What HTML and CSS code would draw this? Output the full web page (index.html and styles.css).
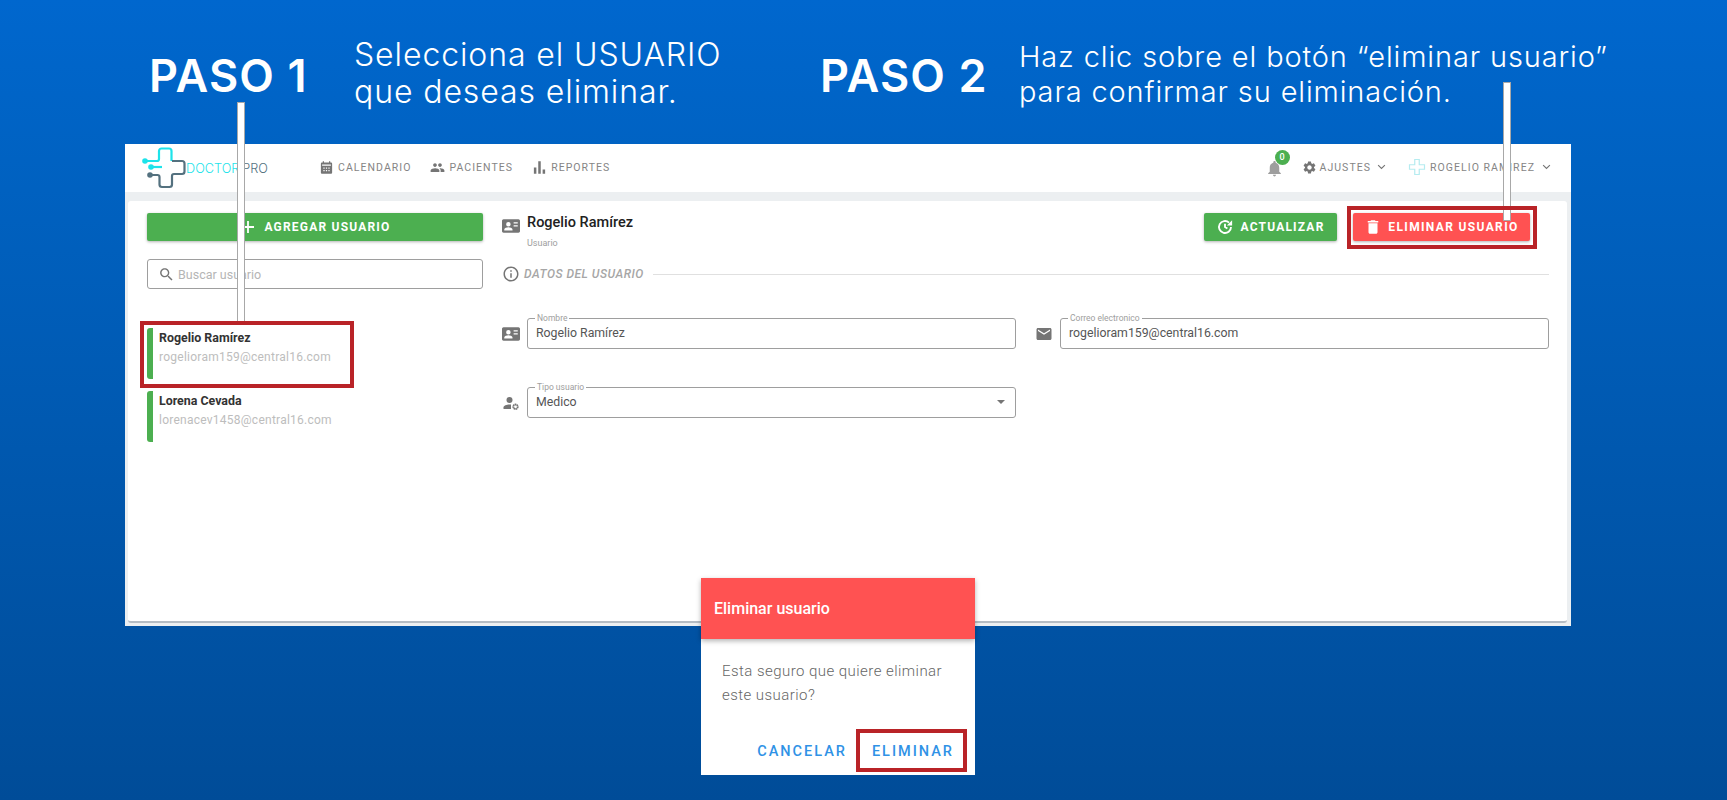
FILE: index.html
```html
<!DOCTYPE html>
<html lang="es">
<head>
    <meta charset="UTF-8">
    <title>Eliminar usuario</title>
    <link rel="stylesheet" href="styles.css">
</head>
<body>
    <svg class="defs" width="0" height="0">
        <symbol id="i-card" viewBox="0 0 24 24"><path fill-rule="evenodd" d="M2 3h20c1 0 2 1 2 2v14c0 1-1 2-2 2H2c-1 0-2-1-2-2V5c0-1 1-2 2-2zm6.500 3.500a3 3 0 1 0 0 6 3 3 0 0 0 0-6zM3 18h11v-1.500c0-1.800-3.500-3-5.500-3S3 14.700 3 16.500V18zM15.500 7v1.800H21V7h-5.500zm0 4v1.800H21V11h-5.500z"/></symbol>
        <symbol id="i-logo" viewBox="0 0 44 42">
            <g fill="none" stroke-width="2.200">
                <path stroke="#1de3ea" d="M3 14h12a2 2 0 0 0 2-2V4a2.500 2.500 0 0 1 2.500-2.500H27a2.500 2.500 0 0 1 2.500 2.500v10"/>
                <path stroke="#1de3ea" d="M9 20h11"/>
                <path stroke="#54717f" d="M30 14h10a2.500 2.500 0 0 1 2.500 2.500v8a2.500 2.500 0 0 1-2.500 2.500H32a2 2 0 0 0-2 2v8.500a2.500 2.500 0 0 1-2.500 2.500H20a2.500 2.500 0 0 1-2.500-2.500V30a2 2 0 0 0-2-2H9"/>
            </g>
            <circle cx="3" cy="14" r="2.800" fill="#1de3ea"/>
            <circle cx="9" cy="20" r="2.800" fill="#1de3ea"/>
            <circle cx="8" cy="28" r="2.800" fill="#54717f"/>
        </symbol>
        <symbol id="i-chevron" viewBox="0 0 12 8"><path fill="none" stroke="#757575" stroke-width="1.500" d="M1.500 1.500 6 6l4.500-4.500"/></symbol>
    </svg>

    <div class="slide">
        <header class="steps">
            <div class="step">
                <h2>PASO 1</h2>
                <p>Selecciona el USUARIO<br>que deseas eliminar.</p>
            </div>
            <div class="step step-two">
                <h2>PASO 2</h2>
                <p>Haz clic sobre el botón “eliminar usuario”<br>para confirmar su eliminación.</p>
            </div>
        </header>

        <div class="window">
            <nav class="topbar">
                <div class="brand">
                    <svg class="brand-logo"><use href="#i-logo"/></svg>
                    <span class="brand-a">DOCTOR</span><span class="brand-b">PRO</span>
                </div>
                <div class="menu">
                    <a class="menu-item">
                        <svg viewBox="0 0 24 24"><path d="M19 4h-1V2h-2v2H8V2H6v2H5C3.900 4 3 4.900 3 6v14c0 1.100.900 2 2 2h14c1.100 0 2-.900 2-2V6c0-1.100-.900-2-2-2zM9 18H7v-2h2v2zm0-4H7v-2h2v2zm4 4h-2v-2h2v2zm0-4h-2v-2h2v2zm4 4h-2v-2h2v2zm0-4h-2v-2h2v2zm2-5H5V7h14v2z"/></svg>
                        CALENDARIO
                    </a>
                    <a class="menu-item">
                        <svg viewBox="0 0 24 24"><path d="M16 11c1.660 0 2.990-1.340 2.990-3S17.660 5 16 5c-1.660 0-3 1.340-3 3s1.340 3 3 3zm-8 0c1.660 0 2.990-1.340 2.990-3S9.660 5 8 5C6.340 5 5 6.340 5 8s1.340 3 3 3zm0 2c-2.330 0-7 1.170-7 3.500V19h14v-2.500c0-2.330-4.670-3.500-7-3.500zm8 0c-.290 0-.620.020-.970.050 1.160.840 1.970 1.970 1.970 3.450V19h6v-2.500c0-2.330-4.670-3.500-7-3.500z"/></svg>
                        PACIENTES
                    </a>
                    <a class="menu-item">
                        <svg viewBox="0 0 24 24"><path d="M3 12h4v10H3zM10 2h4v20h-4zM17 15h4v7h-4z"/></svg>
                        REPORTES
                    </a>
                </div>
                <div class="menu-right">
                    <span class="bell">
                        <svg viewBox="0 0 24 24"><path d="M12 22c1.100 0 2-.900 2-2h-4c0 1.100.890 2 2 2zm6-6v-5c0-3.070-1.640-5.640-4.500-6.320V4c0-.830-.670-1.500-1.500-1.500s-1.500.670-1.500 1.500v.680C7.630 5.360 6 7.920 6 11v5l-2 2v1h16v-1l-2-2z"/></svg>
                        <b class="badge">0</b>
                    </span>
                    <a class="menu-item settings">
                        <svg viewBox="0 0 24 24"><path d="M19.140 12.940c.040-.300.060-.610.060-.940 0-.320-.020-.640-.070-.940l2.030-1.580c.180-.140.230-.410.120-.610l-1.920-3.320c-.120-.220-.370-.290-.590-.220l-2.390.960c-.500-.380-1.030-.700-1.620-.940l-.360-2.540c-.040-.240-.240-.410-.480-.410h-3.840c-.240 0-.430.170-.470.410l-.360 2.540c-.590.240-1.130.570-1.620.940l-2.390-.960c-.220-.080-.470 0-.590.220L2.740 8.870c-.120.210-.080.470.120.610l2.030 1.580c-.050.300-.090.630-.090.940s.020.640.070.940l-2.030 1.580c-.180.140-.230.410-.120.610l1.920 3.320c.120.220.370.290.590.220l2.390-.960c.500.380 1.030.700 1.620.940l.360 2.540c.050.240.240.410.480.410h3.840c.240 0 .440-.170.470-.410l.360-2.540c.590-.240 1.130-.560 1.620-.940l2.390.960c.220.080.470 0 .590-.220l1.920-3.320c.120-.220.070-.470-.120-.610l-2.010-1.580zM12 15.600c-1.980 0-3.600-1.620-3.600-3.600s1.620-3.600 3.600-3.600 3.600 1.620 3.600 3.600-1.620 3.600-3.600 3.600z"/></svg>
                        AJUSTES
                        <svg class="chev"><use href="#i-chevron"/></svg>
                    </a>
                    <a class="menu-item account">
                        <svg class="avatar" viewBox="0 0 24 24"><path fill="none" stroke="#b5ecf0" stroke-width="1.600" d="M9 2h6v7h7v6h-7v7H9v-7H2V9h7z"/></svg>
                        ROGELIO RAMIREZ
                        <svg class="chev"><use href="#i-chevron"/></svg>
                    </a>
                </div>
            </nav>

            <main class="content">
                <section class="card">
                    <aside class="users">
                        <button class="btn btn-green btn-add">
                            <svg viewBox="0 0 24 24"><path fill="none" stroke="#fff" stroke-width="2.400" d="M12 4v16M4 12h16"/></svg>
                            AGREGAR USUARIO
                        </button>
                        <div class="search">
                            <svg viewBox="0 0 24 24"><path d="M15.500 14h-.790l-.280-.270C15.410 12.590 16 11.110 16 9.500 16 5.910 13.090 3 9.500 3S3 5.910 3 9.500 5.910 16 9.500 16c1.610 0 3.090-.590 4.230-1.570l.270.280v.790l5 4.990L20.490 19l-4.990-5zm-6 0C7.010 14 5 11.990 5 9.500S7.010 5 9.500 5 14 7.010 14 9.500 11.990 14 9.500 14z"/></svg>
                            Buscar usuario
                        </div>
                        <ul class="user-list">
                            <li>
                                <strong>Rogelio Ramírez</strong>
                                <span>rogelioram159@central16.com</span>
                            </li>
                            <li>
                                <strong>Lorena Cevada</strong>
                                <span>lorenacev1458@central16.com</span>
                            </li>
                        </ul>
                    </aside>

                    <div class="detail">
                        <div class="detail-head">
                            <svg class="ico"><use href="#i-card"/></svg>
                            <div class="who">
                                <h3>Rogelio Ramírez</h3>
                                <small>Usuario</small>
                            </div>
                            <button class="btn btn-green btn-update">
                                <svg viewBox="0 0 24 24"><path fill="none" stroke="#fff" stroke-width="2.500" d="M20 12a8 8 0 1 1-2.600-5.900M12 7.500V12l3.200 2"/><path fill="#fff" d="M21.500 3v7h-7z"/></svg>
                                ACTUALIZAR
                            </button>
                            <button class="btn btn-red btn-delete">
                                <svg viewBox="0 0 24 24"><path fill="#fff" d="M6 19c0 1.100.900 2 2 2h8c1.100 0 2-.900 2-2V7H6v12zM19 4h-3.500l-1-1h-5l-1 1H5v2h14V4z"/></svg>
                                ELIMINAR USUARIO
                            </button>
                        </div>

                        <div class="section-title">
                            <svg viewBox="0 0 24 24"><path d="M11 7h2v2h-2zm0 4h2v6h-2zm1-9C6.480 2 2 6.480 2 12s4.480 10 10 10 10-4.480 10-10S17.520 2 12 2zm0 18c-4.410 0-8-3.590-8-8s3.590-8 8-8 8 3.590 8 8-3.590 8-8 8z"/></svg>
                            <span>DATOS DEL USUARIO</span>
                            <hr>
                        </div>

                        <div class="fields">
                            <div class="field">
                                <svg class="ico"><use href="#i-card"/></svg>
                                <fieldset>
                                    <legend>Nombre</legend>
                                    <div class="value">Rogelio Ramírez</div>
                                </fieldset>
                            </div>
                            <div class="field">
                                <svg class="ico" viewBox="0 0 24 24"><path d="M20 4H4c-1.100 0-1.990.900-1.990 2L2 18c0 1.100.900 2 2 2h16c1.100 0 2-.900 2-2V6c0-1.100-.900-2-2-2zm0 4l-8 5-8-5V6l8 5 8-5v2z"/></svg>
                                <fieldset>
                                    <legend>Correo electronico</legend>
                                    <div class="value">rogelioram159@central16.com</div>
                                </fieldset>
                            </div>
                            <div class="field">
                                <svg class="ico" viewBox="0 0 24 24"><circle cx="10" cy="8" r="4"/><path d="M2 20v-2c0-2.500 4-4 8-4 .700 0 1.300 0 2 .100V20z"/><circle cx="18" cy="17" r="3" fill="none" stroke="#757575" stroke-width="2.400" stroke-dasharray="1.900 .450"/></svg>
                                <fieldset>
                                    <legend>Tipo usuario</legend>
                                    <div class="value">Medico<i class="caret"></i></div>
                                </fieldset>
                            </div>
                        </div>
                    </div>
                </section>
            </main>
        </div>

        <div class="pointer pointer-one"></div>
        <div class="pointer pointer-two"></div>
        <div class="mark mark-user"></div>
        <div class="mark mark-delete"></div>

        <div class="dialog">
            <div class="dialog-title">Eliminar usuario</div>
            <p>Esta seguro que quiere eliminar este usuario?</p>
            <div class="dialog-actions">
                <a>CANCELAR</a>
                <a>ELIMINAR</a>
            </div>
        </div>
        <div class="mark mark-confirm"></div>
    </div>
</body>
</html>
```

FILE: styles.css
```css
* {
    box-sizing: border-box;
}

body {
    margin: 0;
    font-family: Roboto, "Liberation Sans", sans-serif;
    color: #333;
}

.defs {
    position: absolute;
}

.slide {
    position: relative;
    width: 1727px;
    height: 800px;
    overflow: hidden;
    background: linear-gradient(180deg, #0067ce 0%, #0062c2 20%, #004c98 100%);
}

/* pasos */
.steps {
    display: flex;
    height: 144px;
    padding-left: 149px;
    color: #fff;
    font-family: Inter, "Open Sans", sans-serif;
}

.step {
    display: flex;
    width: 671px;
}

.step h2 {
    width: 205px;
    margin: 50px 0 0;
    font-size: 45px;
    line-height: 52px;
    font-weight: 600;
    letter-spacing: 1.100px;
}

.step p {
    margin: 36px 0 0;
    font-size: 32px;
    line-height: 37px;
    font-weight: 300;
    letter-spacing: 0.900px;
}

.step-two {
    width: auto;
}

.step-two h2 {
    width: 199px;
}

.step-two p {
    font-size: 29px;
    line-height: 35px;
    margin-top: 39px;
    letter-spacing: 0.860px;
}

/* ventana */
.window {
    display: flex;
    flex-direction: column;
    width: 1446px;
    height: 482px;
    margin-left: 125px;
    background: #eceff1;
}

.topbar {
    display: flex;
    align-items: center;
    height: 48px;
    flex: none;
    padding: 0 20px 0 17px;
    background: #fff;
}

.brand {
    display: flex;
    align-items: center;
    width: 177px;
    font-family: Inter, sans-serif;
    font-size: 12.700px;
    font-weight: 300;
}

.brand-logo {
    width: 44px;
    height: 42px;
}

.brand-a {
    color: #1de3ea;
    margin-right: 3px;
}

.brand-b {
    color: #54717f;
}

.menu {
    display: flex;
    gap: 19px;
    margin-bottom: 2px;
}

.menu-item {
    display: flex;
    align-items: center;
    gap: 4px;
    font-size: 10.500px;
    font-weight: 400;
    letter-spacing: 1.050px;
    color: #858585;
}

.menu-item svg {
    width: 15px;
    height: 15px;
    fill: #757575;
}

.menu-right {
    display: flex;
    align-items: center;
    margin-left: auto;
    margin-bottom: 2px;
}

.bell {
    position: relative;
    display: flex;
    margin-top: 2px;
    margin-right: 18px;
}

.bell svg {
    width: 19px;
    height: 19px;
    fill: #9e9e9e;
}

.badge {
    position: absolute;
    top: -9px;
    right: -6px;
    width: 15px;
    height: 15px;
    border-radius: 50%;
    background: #4caf50;
    color: #fff;
    font-size: 9px;
    font-weight: 500;
    line-height: 15px;
    text-align: center;
}

.menu-item .chev {
    width: 9px;
    height: 6px;
    margin-left: 3px;
}

.settings {
    gap: 3px;
    margin-right: 22px;
}

.menu-item .avatar {
    width: 18px;
    height: 18px;
}

.content {
    flex: 1;
    padding: 9px 4px 3px 3px;
}

.card {
    display: flex;
    height: 100%;
    padding: 12px 18px 0 19px;
    background: #fff;
    border-radius: 3px;
    border-bottom: 2px solid #b4bcc4;
}

/* botones */
.btn {
    display: flex;
    align-items: center;
    justify-content: center;
    height: 28px;
    border: 0;
    border-radius: 2px;
    color: #fff;
    font-family: inherit;
    font-size: 12px;
    font-weight: 700;
    letter-spacing: 1.200px;
    box-shadow: 0 1px 3px rgba(0, 0, 0, 0.3);
}

.btn svg {
    width: 18px;
    height: 18px;
    margin-right: 6px;
}

.btn-green {
    background: #4caf50;
}

.btn-red {
    background: #ff5252;
}

/* lista de usuarios */
.users {
    width: 336px;
    flex: none;
}

.btn-add {
    width: 100%;
}

.btn-add svg {
    margin-right: 7px;
}

.search {
    display: flex;
    align-items: center;
    gap: 3px;
    height: 30px;
    margin-top: 18px;
    padding-left: 10px;
    border: 1px solid #9e9e9e;
    border-radius: 3px;
    color: #b5b5b5;
    font-size: 12.500px;
}

.search svg {
    width: 17px;
    height: 17px;
    fill: #757575;
}

.user-list {
    list-style: none;
    margin: 39px 0 0;
    padding: 0;
}

.user-list li {
    display: flex;
    flex-direction: column;
    height: 51px;
    margin-bottom: 12px;
    padding: 2px 0 0 6px;
    border-left: 6px solid #4caf50;
    border-radius: 3px 0 0 3px;
}

.user-list strong {
    font-size: 12.400px;
    line-height: 16px;
    font-weight: 700;
    color: #333;
}

.user-list span {
    margin-top: 3px;
    font-size: 12px;
    line-height: 16px;
    letter-spacing: 0.250px;
    color: #bdbdbd;
}

/* detalle */
.detail {
    flex: 1;
    margin-left: 19px;
}

.ico {
    width: 18px;
    height: 18px;
    flex: none;
    fill: #757575;
}

.detail-head {
    display: flex;
    align-items: flex-start;
    height: 52px;
}

.detail-head .ico {
    margin: 4px 7px 0 0;
}

.who {
    flex: 1;
}

.who h3 {
    margin: 1px 0 0;
    font-size: 14.500px;
    line-height: 18px;
    font-weight: 500;
    color: #212121;
}

.who small {
    display: block;
    margin-top: 6px;
    font-size: 9px;
    line-height: 11px;
    color: #9e9e9e;
}

.btn-update {
    width: 133px;
    margin-right: 16px;
}

.btn-delete {
    width: 177px;
    margin-right: 19px;
    letter-spacing: 1.350px;
}

.section-title {
    display: flex;
    align-items: center;
    height: 18px;
    color: #a6a6a6;
}

.section-title svg {
    width: 18px;
    height: 18px;
    fill: #757575;
    margin-right: 4px;
}

.section-title span {
    font-size: 12px;
    font-style: italic;
    font-weight: 500;
    letter-spacing: 0.500px;
}

.section-title hr {
    flex: 1;
    margin: 0 0 0 9px;
    border: 0;
    border-top: 1px solid #e0e0e0;
}

.fields {
    display: grid;
    grid-template-columns: 514px 514px;
    gap: 34px 19px;
    margin-top: 31px;
}

.field {
    display: flex;
    align-items: center;
    gap: 7px;
}

.field .ico {
    margin-top: 5px;
}

fieldset {
    flex: 1;
    height: 35px;
    margin: 0;
    padding: 0 8px;
    border: 1px solid #9e9e9e;
    border-radius: 3px;
}

legend {
    padding: 0 2px;
    margin-left: -1px;
    font-size: 8.500px;
    line-height: 9px;
    color: #9e9e9e;
}

.value {
    position: relative;
    padding-top: 2px;
    font-size: 12.300px;
    line-height: 17px;
    color: #555;
}

.caret {
    position: absolute;
    top: 8px;
    right: 2px;
    border: 4px solid transparent;
    border-top-color: #757575;
    border-bottom: 0;
}

/* lineas y marcas sobre la captura */
.pointer {
    position: absolute;
    width: 8px;
    background: #fff;
    border: 1px solid #a8a8a8;
}

.pointer-one {
    left: 237px;
    top: 102px;
    height: 220px;
}

.pointer-two {
    left: 1503px;
    top: 82px;
    height: 139px;
}

.mark {
    position: absolute;
    border: 4px solid #b92327;
}

.mark-user {
    left: 140px;
    top: 321px;
    width: 214px;
    height: 67px;
}

.mark-delete {
    left: 1347px;
    top: 206px;
    width: 190px;
    height: 43px;
}

.mark-confirm {
    left: 856px;
    top: 729px;
    width: 111px;
    height: 43px;
}

/* dialogo */
.dialog {
    position: absolute;
    left: 701px;
    top: 578px;
    width: 274px;
    height: 197px;
    background: #fff;
}

.dialog-title {
    height: 61px;
    padding-left: 13px;
    background: #ff5252;
    box-shadow: 0 2px 5px rgba(0, 0, 0, 0.3);
    color: #fff;
    font-size: 16px;
    font-weight: 500;
    line-height: 61px;
}

.dialog p {
    margin: 20px 24px 0 21px;
    font-size: 15px;
    line-height: 24px;
    font-weight: 300;
    letter-spacing: 0.450px;
    color: #666;
}

.dialog-actions {
    display: flex;
    justify-content: flex-end;
    gap: 25px;
    margin: 36px 21px 0 0;
    color: #2f92e6;
    font-size: 14.500px;
    font-weight: 500;
    letter-spacing: 2px;
}
```
